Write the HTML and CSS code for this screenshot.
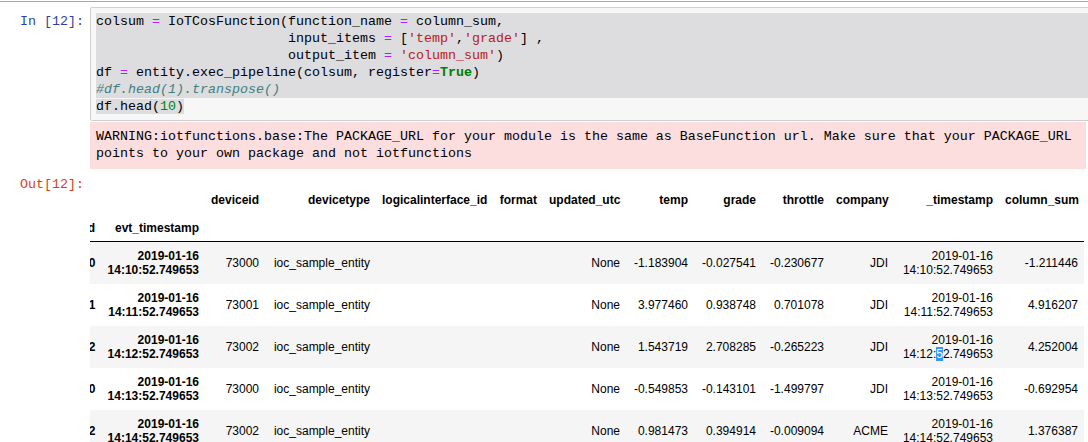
FILE: index.html
```html
<!DOCTYPE html>
<html>
<head>
<meta charset="utf-8">
<title>Notebook</title>
<link rel="stylesheet" href="styles.css">
</head>
<body>
<div class="topline"></div>
<div class="cell">
  <div class="row">
    <div class="prompt in">In&nbsp;[12]:</div>
    <div class="input-area">
<div class="line sel">colsum <span class="op">=</span> IoTCosFunction(function_name <span class="op">=</span> column_sum,</div>
<div class="line sel">                        input_items <span class="op">=</span> [<span class="str">'temp'</span>,<span class="str">'grade'</span>] ,</div>
<div class="line sel">                        output_item <span class="op">=</span> <span class="str">'column_sum'</span>)</div>
<div class="line sel">df <span class="op">=</span> entity.exec_pipeline(colsum, register<span class="op">=</span><span class="kw">True</span>)</div>
<div class="line sel"><span class="cm">#df.head(1).transpose()</span></div>
<div class="line"><span class="selpart">df.head(<span class="num">10</span>)</span></div>
    </div>
  </div>
  <div class="row">
    <div class="prompt"></div>
    <pre class="stderr">WARNING:iotfunctions.base:The PACKAGE_URL for your module is the same as BaseFunction url. Make sure that your PACKAGE_URL
points to your own package and not iotfunctions</pre>
  </div>
  <div class="row">
    <div class="prompt out">Out[12]:</div>
    <div class="output-html">
      <table class="df">
        <colgroup>
          <col class="c-id"><col class="c-evt"><col class="c-devid"><col class="c-devtype"><col class="c-logic"><col class="c-format"><col class="c-upd"><col class="c-num"><col class="c-num"><col class="c-num"><col class="c-comp"><col class="c-ts"><col class="c-sum">
        </colgroup>
        <thead>
          <tr class="cols">
            <th></th><th></th><th>deviceid</th><th>devicetype</th><th>logicalinterface_id</th><th>format</th><th>updated_utc</th><th>temp</th><th>grade</th><th>throttle</th><th>company</th><th>_timestamp</th><th>column_sum</th>
          </tr>
          <tr class="names">
            <th>id</th><th>evt_timestamp</th><th></th><th></th><th></th><th></th><th></th><th></th><th></th><th></th><th></th><th></th><th></th>
          </tr>
        </thead>
        <tbody>
          <tr>
            <th>73000</th><th>2019-01-16 14:10:52.749653</th><td>73000</td><td>ioc_sample_entity</td><td></td><td></td><td>None</td><td>-1.183904</td><td>-0.027541</td><td>-0.230677</td><td>JDI</td><td>2019-01-16 14:10:52.749653</td><td>-1.211446</td>
          </tr>
          <tr>
            <th>73001</th><th>2019-01-16 14:11:52.749653</th><td>73001</td><td>ioc_sample_entity</td><td></td><td></td><td>None</td><td>3.977460</td><td>0.938748</td><td>0.701078</td><td>JDI</td><td>2019-01-16 14:11:52.749653</td><td>4.916207</td>
          </tr>
          <tr>
            <th>73002</th><th>2019-01-16 14:12:52.749653</th><td>73002</td><td>ioc_sample_entity</td><td></td><td></td><td>None</td><td>1.543719</td><td>2.708285</td><td>-0.265223</td><td>JDI</td><td>2019-01-16 14:12:<span class="hl">5</span>2.749653</td><td>4.252004</td>
          </tr>
          <tr>
            <th>73000</th><th>2019-01-16 14:13:52.749653</th><td>73000</td><td>ioc_sample_entity</td><td></td><td></td><td>None</td><td>-0.549853</td><td>-0.143101</td><td>-1.499797</td><td>JDI</td><td>2019-01-16 14:13:52.749653</td><td>-0.692954</td>
          </tr>
          <tr>
            <th>73002</th><th>2019-01-16 14:14:52.749653</th><td>73002</td><td>ioc_sample_entity</td><td></td><td></td><td>None</td><td>0.981473</td><td>0.394914</td><td>-0.009094</td><td>ACME</td><td>2019-01-16 14:14:52.749653</td><td>1.376387</td>
          </tr>
        </tbody>
      </table>
    </div>
  </div>
</div>
</body>
</html>
```
FILE: styles.css
```css
html, body {
  margin: 0;
  padding: 0;
  background: #fff;
  overflow: hidden;
}
body {
  width: 1088px;
  height: 442px;
  font-family: "Liberation Sans", Arial, sans-serif;
  color: #000;
}
.topline {
  height: 2px;
  background: linear-gradient(#fff 0, #fff 1px, #a8a8a8 1px, #a8a8a8 2px);
}
.cell {
  margin-top: 5px;
}
.row {
  display: flex;
  align-items: flex-start;
}
.prompt {
  flex: 0 0 90px;
  box-sizing: border-box;
  padding-right: 6px;
  text-align: right;
  font-family: "Liberation Mono", "Courier New", monospace;
  font-size: 13.33px;
  line-height: 17px;
  white-space: nowrap;
}
.prompt.in {
  color: #303f9f;
  padding-top: 6px;
}
.prompt.out {
  color: #d84315;
  padding-top: 7px;
}
.input-area {
  flex: 1 1 auto;
  margin-right: -10px;
  border: 1px solid #cfcfcf;
  border-radius: 2px;
  background: #f7f7f7;
  padding: 5px 0 5px 5px;
  font-family: "Liberation Mono", "Courier New", monospace;
  font-size: 13.33px;
  line-height: 17px;
}
.line {
  white-space: pre;
  height: 17px;
}
.line.sel,
.selpart {
  background: #dddcdf;
}
.op { color: #aa22ff; }
.str { color: #ba2121; }
.kw { color: #008000; font-weight: bold; }
.cm { color: #408080; font-style: italic; }
.num { color: #008800; }
.stderr {
  margin: 1px 0 0 0;
  width: 996px;
  box-sizing: border-box;
  background: #fddede;
  padding: 6px 6px 7px;
  font-family: "Liberation Mono", "Courier New", monospace;
  font-size: 13.33px;
  line-height: 17px;
  white-space: pre;
  color: #000;
}
.output-html {
  flex: 1 1 auto;
  overflow: hidden;
  padding-top: 17px;
}
.df {
  border-collapse: separate;
  border-spacing: 0;
  table-layout: fixed;
  width: 1028px;
  margin-left: -34px;
  font-size: 12px;
  color: #000;
}
.df th,
.df td {
  padding: 7px 6px;
  line-height: 14px;
  text-align: right;
  vertical-align: middle;
  white-space: normal;
}
.df th { font-weight: bold; }
.df td { font-weight: normal; }
.df thead tr.names th {
  padding-bottom: 6px;
  border-bottom: 1px solid #000;
}
.df tbody tr:nth-child(odd) {
  background: #f5f5f5;
}
.c-id { width: 45px; }
.c-evt { width: 104px; }
.c-devid { width: 60px; }
.c-devtype { width: 111px; }
.c-logic { width: 117px; }
.c-format { width: 50px; }
.c-upd { width: 83px; }
.c-num { width: 68px; }
.c-comp { width: 64px; }
.c-ts { width: 105px; }
.c-sum { width: 85px; }
.hl {
  background: #3297fd;
  color: #fff;
}
```
